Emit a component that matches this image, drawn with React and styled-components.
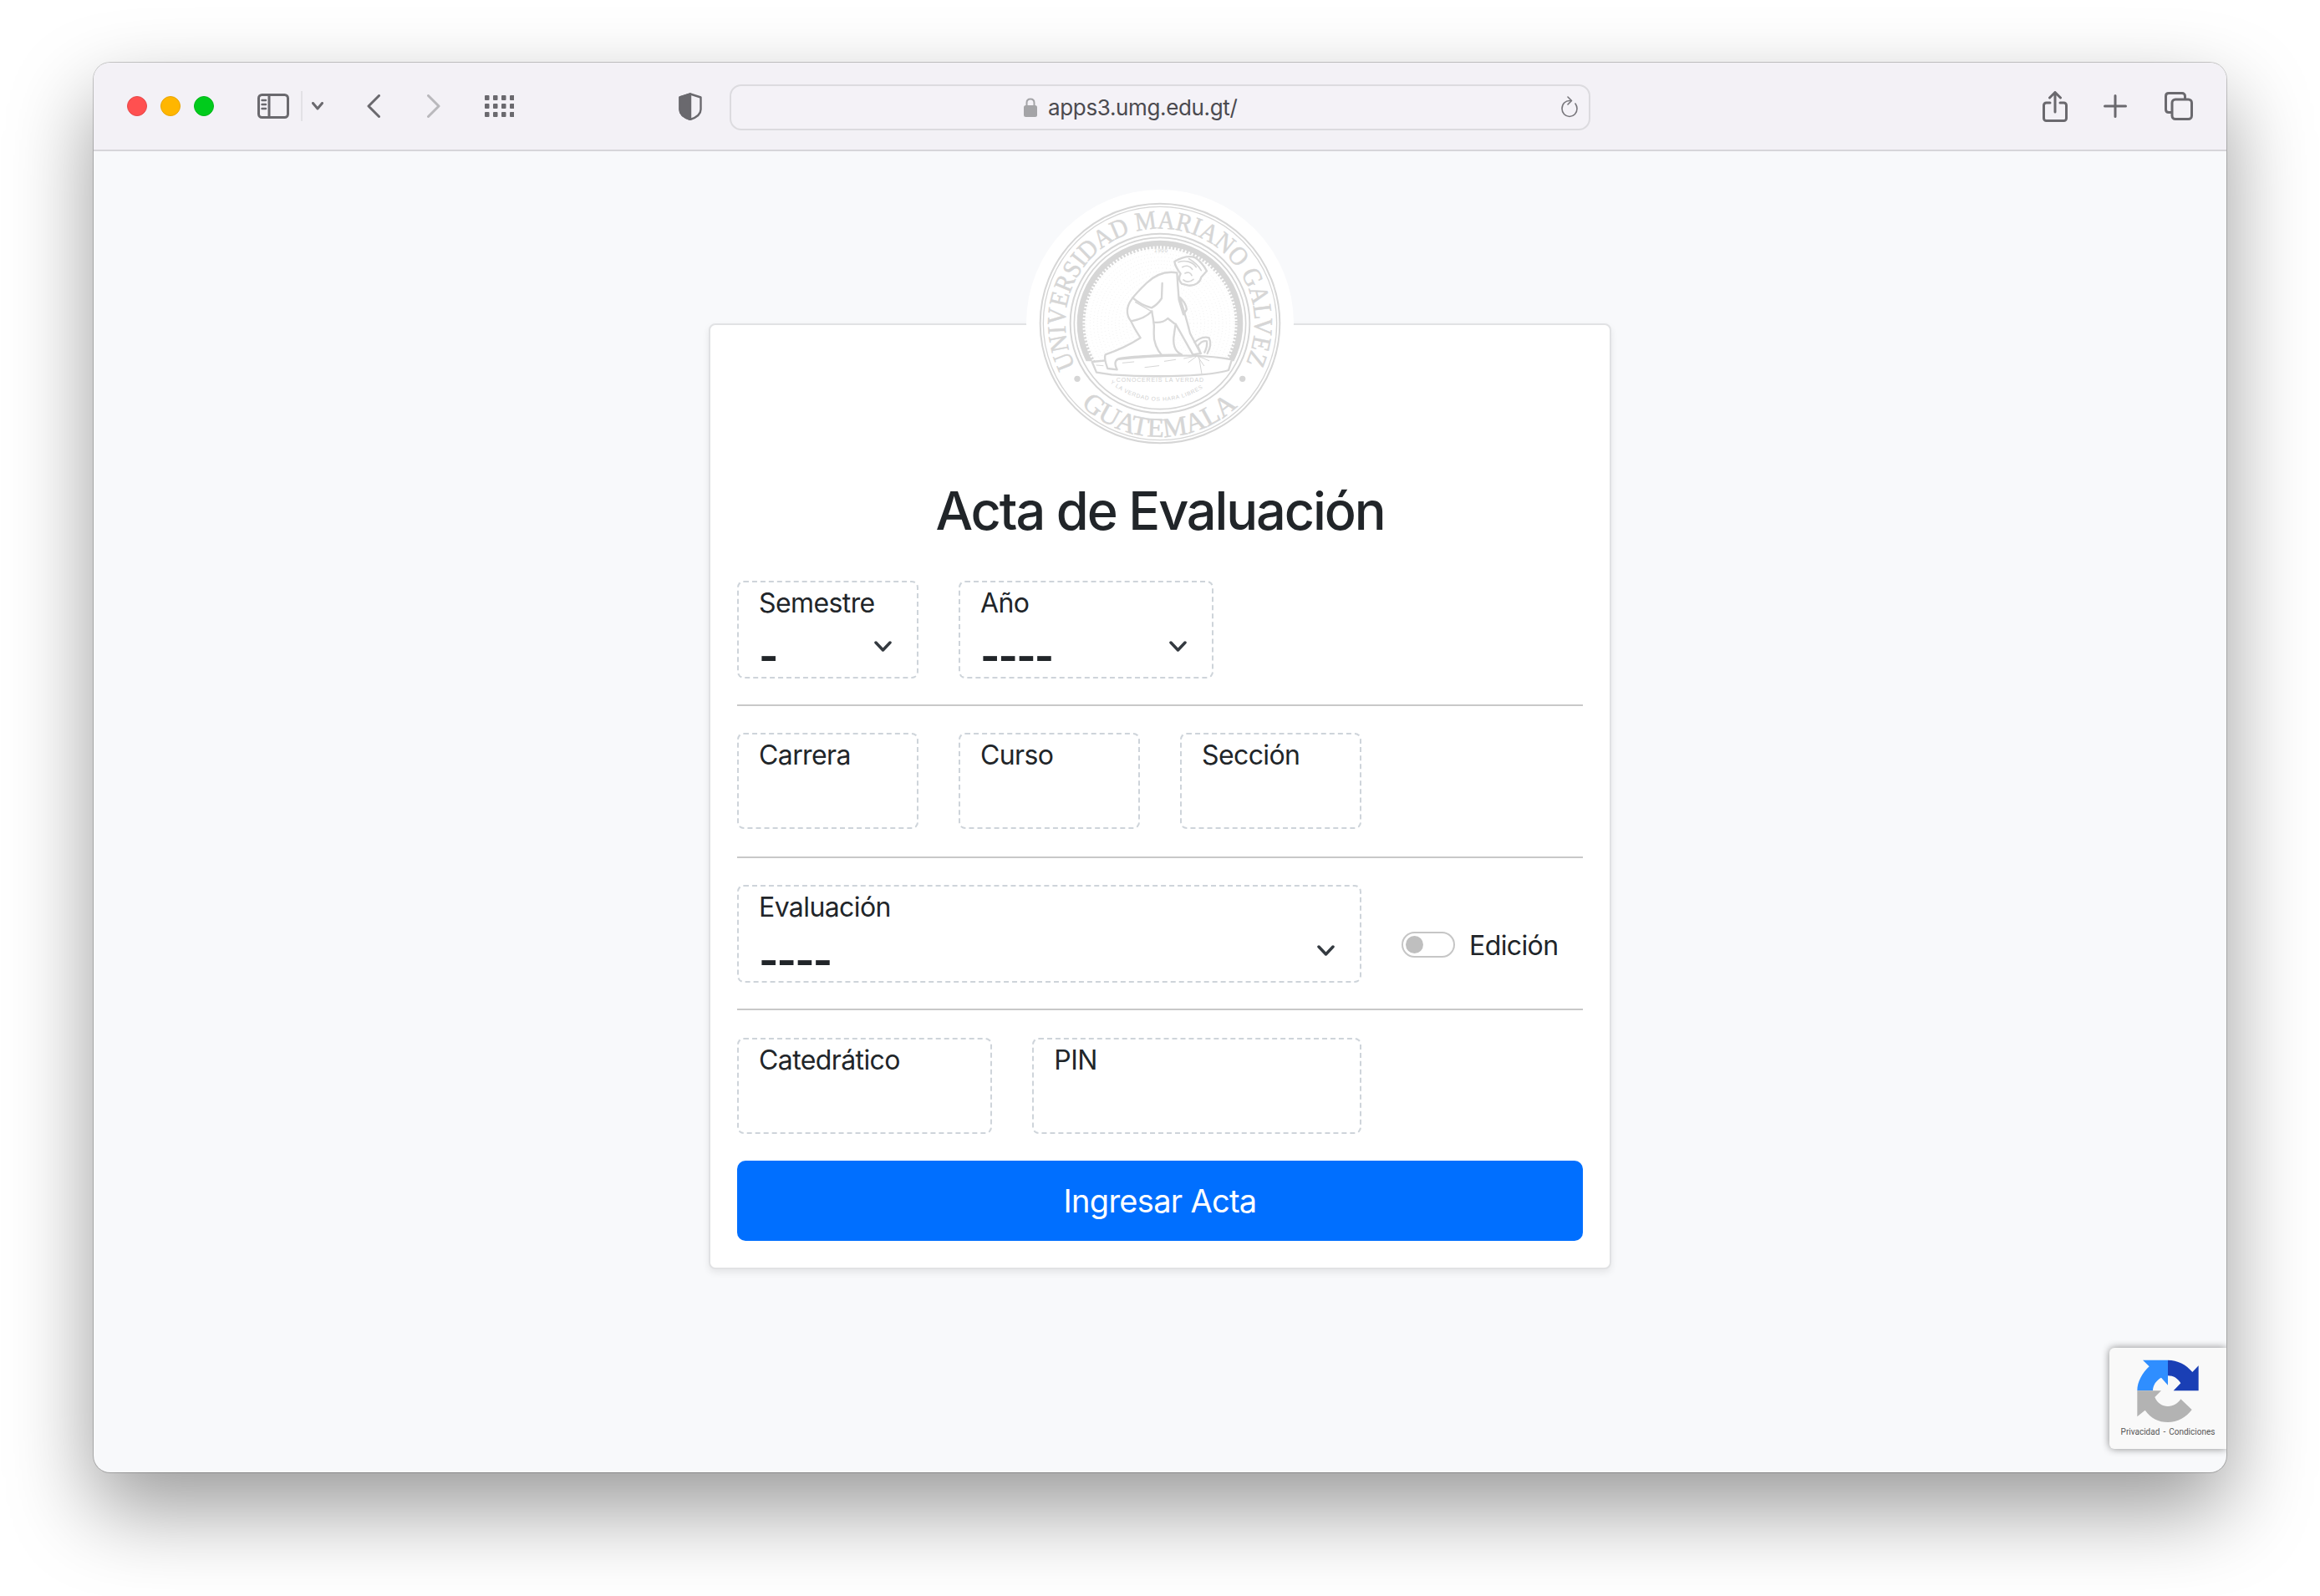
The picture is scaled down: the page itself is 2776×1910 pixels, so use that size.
import React from "react"
import styled, { createGlobalStyle } from "styled-components"

const GlobalStyle = createGlobalStyle`
  html, body {
    margin: 0;
    padding: 0;
    background: #fff;
  }
  * {
    box-sizing: border-box;
  }
`
const Page = styled.div`
  width: 2776px;
  height: 1910px;
  padding: 75px 112px 0;
  overflow: hidden;
  background: #fff;
  font-family: Inter, "Liberation Sans", sans-serif;
  color: #212529;
`
const BrowserWindow = styled.div`
  width: 2552px;
  height: 1687px;
  display: flex;
  flex-direction: column;
  border-radius: 20px;
  background: #f8f9fb;
  box-shadow: 0 44px 100px rgba(0, 0, 0, 0.4), 0 0 0 1px rgba(0, 0, 0, 0.2);
`
const Toolbar = styled.div`
  height: 106px;
  flex: none;
  display: flex;
  align-items: center;
  padding: 0 40px;
  background: #f3f1f6;
  border-bottom: 2px solid #d6d5d9;
  border-radius: 20px 20px 0 0;
`
const Lights = styled.div`
  display: flex;
  gap: 16px;
`
const Light = styled.span`
  width: 24px;
  height: 24px;
  border-radius: 50%;
  background: ${p => p.$color};
  border: 1px solid ${p => p.$edge};
`
const ToolIcon = styled.svg`
  display: block;
  flex: none;
  margin-left: ${p => p.$left || 0}px;
  fill: none;
  stroke: ${p => p.$stroke || "#6a696e"};
  stroke-width: ${p => p.$weight || 3};
  stroke-linecap: round;
  stroke-linejoin: round;
`
const Separator = styled.span`
  width: 2px;
  height: 36px;
  margin-left: 14px;
  background: #e2e1e5;
`
const UrlBar = styled.div`
  width: 1030px;
  height: 55px;
  margin: 2px 0 0 33px;
  padding: 0 12px 0 350px;
  display: flex;
  align-items: center;
  border: 2px solid #dcdbdf;
  border-radius: 14px;
  background: #f4f2f7;
`
const LockIcon = styled.svg`
  display: block;
  flex: none;
  margin-right: 13px;
`
const UrlText = styled.span`
  font-family: Inter, "Liberation Sans", sans-serif;
  font-size: 26px;
  letter-spacing: -0.35px;
  color: #4b4a4f;
  margin-right: auto;
`
const RightTools = styled.div`
  margin-left: auto;
  display: flex;
  align-items: center;
`
const Content = styled.div`
  position: relative;
  flex: 1;
  padding-top: 206px;
  display: flex;
  flex-direction: column;
  align-items: center;
  border-radius: 0 0 20px 20px;
  overflow: hidden;
`
const Card = styled.div`
  width: 1080px;
  height: 1132px;
  padding: 0 32px;
  display: flex;
  flex-direction: column;
  background: #fff;
  border: 2px solid #e1e2e4;
  border-radius: 8px;
  box-shadow: 0 4px 8px rgba(0, 0, 0, 0.08);
`
const SealWrap = styled.div`
  align-self: center;
  width: 320px;
  height: 320px;
  margin-top: -162px;
`
const Title = styled.h1`
  margin: 28px 0 48px;
  font-size: 63px;
  line-height: 72px;
  font-weight: 500;
  text-align: center;
  letter-spacing: -2.1px;
`
const Form = styled.form`
  display: flex;
  flex-direction: column;
  gap: 32.6px;
`
const Row = styled.div`
  display: grid;
  grid-template-columns: repeat(12, 1fr);
  column-gap: 48px;
  height: 115px;
`
const Divider = styled.hr`
  margin: 0;
  height: 2px;
  border: 0;
  background: #c8c8c8;
`
const Field = styled.div`
  grid-column: span ${p => p.$span};
  display: flex;
  flex-direction: column;
  padding: 3px 24px 0 24px;
  border: 2px dashed #ced4da;
  border-radius: 8px;
`
const Label = styled.label`
  font-size: 32px;
  line-height: 43px;
  letter-spacing: -0.6px;
`
const ValueRow = styled.div`
  display: flex;
  justify-content: space-between;
  align-items: flex-start;
  margin: 15px 6px 0 0;
`
const DashValue = styled.span`
  margin-top: 2px;
  font-size: 50px;
  font-weight: 700;
  line-height: 50px;
  letter-spacing: -1.8px;
`
const Chevron = styled.svg`
  display: block;
  margin-top: 9px;
  fill: none;
  stroke: #343a40;
  stroke-width: 3.5;
  stroke-linecap: round;
  stroke-linejoin: round;
`
const SwitchCell = styled.div`
  grid-column: span 3;
  display: flex;
  align-items: flex-start;
  gap: 17px;
  padding-top: 56px;
`
const SwitchTrack = styled.span`
  width: 64px;
  height: 31px;
  flex: none;
  padding: 3px;
  display: flex;
  align-items: center;
  border: 2px solid #c6c6c6;
  border-radius: 16px;
  background: #fff;
`
const SwitchKnob = styled.span`
  width: 21px;
  height: 21px;
  border-radius: 50%;
  background: #bfbfbf;
`
const SwitchLabel = styled.span`
  font-size: 32px;
  line-height: 33px;
  letter-spacing: -0.6px;
`
const SubmitButton = styled.button`
  height: 96px;
  border: 0;
  border-radius: 10px;
  background: #006fff;
  color: #fff;
  font-family: inherit;
  font-size: 38px;
  letter-spacing: -0.7px;
`
const Captcha = styled.div`
  position: absolute;
  right: 0;
  bottom: 28px;
  width: 140px;
  height: 121px;
  display: flex;
  flex-direction: column;
  align-items: center;
  padding-top: 14px;
  background: #f9f9f9;
  border-radius: 6px 0 0 6px;
  box-shadow: 0 0 10px rgba(0, 0, 0, 0.45);
`
const CaptchaText = styled.span`
  margin-top: 5px;
  font-family: Roboto, "Liberation Sans", sans-serif;
  font-size: 10px;
  line-height: 14px;
  word-spacing: 1.6px;
  white-space: nowrap;
  color: #555;
`

const SEAL = "#d6d6d6"

const Seal = () => {
  const rings = []
  for (let r = 30; r < 270; r += 13) {
    rings.push(
      <circle key={r} cx="564" cy="534" r={r} fill="none" stroke="#e2e2e2" strokeWidth="2.5" strokeDasharray={`1.5 ${8 + (r % 5)}`} />
    )
  }
  return (
    <svg width="320" height="320" viewBox="84 54 960 960">
      <defs>
        <path id="sealTop" d="M261 688 A340 340 0 1 1 867 688" />
        <path id="sealBottom" d="M281 827 A407 407 0 0 0 847 827" />
        <path id="sealMotto" d="M385 747 A278 278 0 0 0 743 747" />
        <clipPath id="sealSky">
          <rect x="200" y="180" width="730" height="490" />
        </clipPath>
      </defs>
      <circle cx="564" cy="534" r="480" fill="#fff" />
      <g fill="none" stroke={SEAL}>
        <circle cx="564" cy="534" r="430" strokeWidth="6" />
        <circle cx="564" cy="534" r="419" strokeWidth="4" />
        <circle cx="564" cy="534" r="322" strokeWidth="6" />
        <circle cx="564" cy="534" r="308" strokeWidth="5" />
      </g>
      <g clipPath="url(#sealSky)" fill="none" stroke={SEAL}>
        <circle cx="564" cy="534" r="288" strokeWidth="20" />
        <circle cx="564" cy="534" r="275" strokeWidth="12" strokeDasharray="7 6" />
        {rings}
      </g>
      <g fontFamily='"Liberation Serif", serif' fill={SEAL} stroke={SEAL} strokeWidth="1.5">
        <text fontSize="94">
          <textPath href="#sealTop" textLength="1375" lengthAdjust="spacingAndGlyphs">UNIVERSIDAD MARIANO GALVEZ</textPath>
        </text>
        <text fontSize="98">
          <textPath href="#sealBottom" textLength="620" lengthAdjust="spacingAndGlyphs">GUATEMALA</textPath>
        </text>
      </g>
      <g fontFamily='"Liberation Sans", sans-serif' fill="#d2d2d2">
        <text x="568" y="279" fontSize="19" textAnchor="middle" letterSpacing="2">1966</text>
        <text x="565" y="743" fontSize="21" textAnchor="middle" letterSpacing="2.5">CONOCEREIS LA VERDAD</text>
        <text fontSize="20" letterSpacing="2.2">
          <textPath href="#sealMotto">Y LA VERDAD OS HARA LIBRES</textPath>
        </text>
      </g>
      <circle cx="267" cy="733" r="11" fill={SEAL} />
      <circle cx="860" cy="733" r="11" fill={SEAL} />
      <g transform="translate(270 240)" fill="#fff" stroke={SEAL} strokeWidth="7" strokeLinecap="round" strokeLinejoin="round">
        <path d="M50 432 L130 424 C200 416 300 408 410 410 C470 412 520 418 552 424 L540 462 C480 482 300 490 120 478 L66 470 Z" />
        <path d="M355 112 C320 106 280 116 245 150 C222 172 205 190 192 208 C174 232 170 262 190 286 C200 310 214 330 224 346 C190 368 140 392 98 406 C92 420 100 440 106 456 L140 460 C130 440 130 425 150 420 C200 412 270 410 300 408 L372 406 C348 396 338 370 345 330 L350 296 L412 406 L440 402 L402 330 C392 290 378 240 364 200 C380 214 388 226 390 244 L378 262 L362 210 L358 158 Z" />
        <path d="M190 286 C215 282 245 272 265 250 C268 280 276 290 272 330 C270 360 284 390 300 408" fill="none" />
        <path d="M272 290 C290 292 310 288 322 276 L345 294" fill="none" />
        <path d="M196 202 C216 220 240 232 264 238 C280 230 292 216 300 204 L302 150" fill="none" />
        <path d="M206 218 L262 250" fill="none" strokeWidth="4" />
        <path d="M346 72 C370 58 398 50 420 58 C438 70 452 88 462 106 L442 128 C438 146 422 160 396 158 L372 152 C360 140 362 126 368 116 C356 100 348 88 346 72 Z" />
        <path d="M360 74 C384 66 410 72 424 92 M374 92 C388 84 402 88 410 100 M384 114 C394 108 404 112 408 122 M398 62 C416 72 432 86 442 104 M378 138 C388 146 402 146 414 136" fill="none" strokeWidth="5" />
        <path d="M418 362 C434 346 456 340 470 346 C478 362 474 384 464 402 M432 372 C442 360 454 356 462 358 C464 372 460 386 454 398 M430 376 L440 402" fill="none" />
        <path d="M426 412 L396 434 M430 414 L452 446 M432 412 L470 428 M420 412 L380 420 M434 416 L444 476 M160 436 L200 432 M240 452 L290 446 M310 430 L350 424 M90 446 L66 444" fill="none" strokeWidth="3" />
      </g>
    </svg>
  )
}

const SelectChevron = ({ width = 21 }) => (
  <Chevron width={width} height="13" viewBox="0 0 21 13">
    <path d="M2 2 L10.5 11 L19 2" />
  </Chevron>
)

const SelectField = ({ span, label, value }) => (
  <Field $span={span}>
    <Label>{label}</Label>
    <ValueRow>
      <DashValue>{value}</DashValue>
      <SelectChevron />
    </ValueRow>
  </Field>
)

const TextField = ({ span, label }) => (
  <Field $span={span}>
    <Label>{label}</Label>
  </Field>
)

const CaptchaLogo = () => (
  <svg width="74" height="75" viewBox="232 140 220 225">
    <path fill="#2f8eff" d="M252 142 L342 142 L342 232 L318 205 C300 215 288 232 288 252 L232 252 C232 220 250 188 275 165 Z" />
    <path fill="#1a3fb5" d="M342 142 C376 142 408 158 430 185 L452 162 L452 252 L362 252 L388 225 C378 208 362 198 342 198 Z" />
    <path fill="#b3b3b3" d="M232 252 L318 252 L295 275 C305 298 322 308 342 308 C362 308 378 298 388 282 L428 320 C408 348 376 365 342 365 C308 365 280 350 260 322 L232 345 Z" />
  </svg>
)

const App = () => {
  return (
    <Page>
      <GlobalStyle />
      <BrowserWindow>
        <Toolbar>
          <Lights>
            <Light $color="#ff5050" $edge="#e5484a" />
            <Light $color="#ffb600" $edge="#e8a400" />
            <Light $color="#00cb1c" $edge="#00b618" />
          </Lights>
          <ToolIcon $left={52} width="38" height="30" viewBox="0 0 38 30">
            <rect x="1.5" y="1.5" width="35" height="27" rx="4" />
            <path d="M14 2 V28" />
            <path d="M5.5 8 H10 M5.5 13 H10 M5.5 18 H10" strokeWidth="2.4" />
          </ToolIcon>
          <Separator />
          <ToolIcon $left={11} width="14" height="10" viewBox="0 0 14 10">
            <path d="M1.5 1.5 L7 8 L12.5 1.5" />
          </ToolIcon>
          <ToolIcon $left={52} width="16" height="28" viewBox="0 0 16 28">
            <path d="M14.5 1.5 L2 14 L14.5 26.5" />
          </ToolIcon>
          <ToolIcon $left={56} $stroke="#b9b8bc" width="16" height="28" viewBox="0 0 16 28">
            <path d="M1.5 1.5 L14 14 L1.5 26.5" />
          </ToolIcon>
          <ToolIcon $left={53} width="35" height="26" viewBox="0 0 35 26">
            <g fill="#6a696e" stroke="none">
              {[0, 1, 2].map(r =>
                [0, 1, 2, 3].map(c => <rect key={`${r}-${c}`} x={c * 10} y={r * 10} width="5.5" height="6" rx="1" />)
              )}
            </g>
          </ToolIcon>
          <ToolIcon $left={197} $weight={2.4} width="28" height="33" viewBox="0 0 28 33">
            <path d="M14 1.5 L26.5 5.5 V20 C26.5 26 20 30 14 32 C8 30 1.5 26 1.5 20 V5.5 Z" />
            <path d="M14 1.5 L1.5 5.5 V20 C1.5 26 8 30 14 32 Z" fill="#6a696e" />
          </ToolIcon>
          <UrlBar>
            <LockIcon width="16" height="23" viewBox="0 0 16 23">
              <path d="M3.5 10 V6 C3.5 3 5.5 1.5 8 1.5 C10.5 1.5 12.5 3 12.5 6 V10" fill="none" stroke="#a4a4a7" strokeWidth="2" />
              <rect x="0" y="9" width="16" height="14" rx="2.5" fill="#a4a4a7" />
            </LockIcon>
            <UrlText>apps3.umg.edu.gt/</UrlText>
            <ToolIcon $weight={1.6} $stroke="#77767b" width="22" height="26" viewBox="0 0 22 26">
              <path d="M12 5.5 C6 5 2 9.5 2 15 C2 20.5 6 24.5 11 24.5 C16 24.5 20 20.5 20 15 C20 12.5 19 10.5 18 9" />
              <path d="M9 1 L13.5 5.5 L9 10" />
            </ToolIcon>
          </UrlBar>
          <RightTools>
            <ToolIcon width="30" height="37" viewBox="0 0 30 37">
              <path d="M9 14 H4.5 C2.8 14 1.5 15.3 1.5 17 V32.5 C1.5 34.2 2.8 35.5 4.5 35.5 H25.5 C27.2 35.5 28.5 34.2 28.5 32.5 V17 C28.5 15.3 27.2 14 25.5 14 H21" />
              <path d="M15 25 V2 M8.5 8 L15 1.5 L21.5 8" />
            </ToolIcon>
            <ToolIcon $left={43} width="28" height="28" viewBox="0 0 28 28">
              <path d="M14 1.5 V26.5 M1.5 14 H26.5" />
            </ToolIcon>
            <ToolIcon $left={45} width="34" height="34" viewBox="0 0 34 34">
              <path d="M8 24.5 H5 C2.8 24.5 1.5 23 1.5 21 V5 C1.5 3 2.8 1.5 5 1.5 H21 C23 1.5 24.5 3 24.5 5 V8" />
              <rect x="9" y="9" width="23.5" height="23.5" rx="4" />
            </ToolIcon>
          </RightTools>
        </Toolbar>
        <Content>
          <Card>
            <SealWrap>
              <Seal />
            </SealWrap>
            <Title>Acta de Evaluación</Title>
            <Form>
              <Row>
                <SelectField span={3} label="Semestre" value="-" />
                <SelectField span={4} label="Año" value="----" />
              </Row>
              <Divider />
              <Row>
                <TextField span={3} label="Carrera" />
                <TextField span={3} label="Curso" />
                <TextField span={3} label="Sección" />
              </Row>
              <Divider />
              <Row>
                <SelectField span={9} label="Evaluación" value="----" />
                <SwitchCell>
                  <SwitchTrack>
                    <SwitchKnob />
                  </SwitchTrack>
                  <SwitchLabel>Edición</SwitchLabel>
                </SwitchCell>
              </Row>
              <Divider />
              <Row>
                <TextField span={4} label="Catedrático" />
                <TextField span={5} label="PIN" />
              </Row>
              <SubmitButton type="button">Ingresar Acta</SubmitButton>
            </Form>
          </Card>
          <Captcha>
            <CaptchaLogo />
            <CaptchaText>Privacidad - Condiciones</CaptchaText>
          </Captcha>
        </Content>
      </BrowserWindow>
    </Page>
  )
}

export default App
